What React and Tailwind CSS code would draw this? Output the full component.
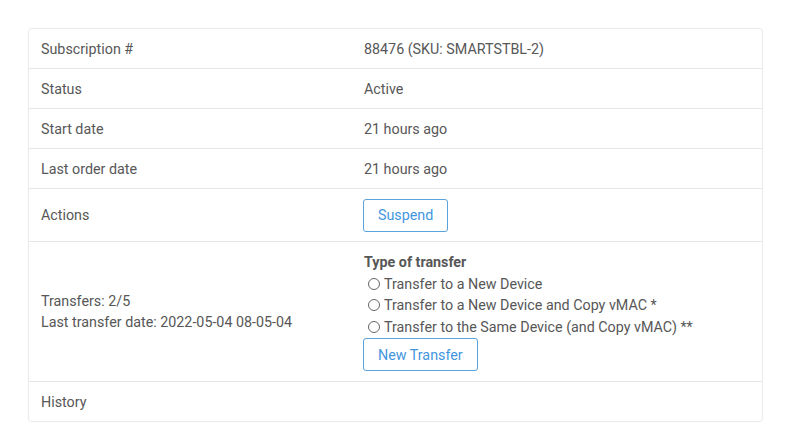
import { useState } from 'react'

const rows = [
  { label: 'Subscription #', value: '88476 (SKU: SMARTSTBL-2)' },
  { label: 'Status', value: 'Active' },
  { label: 'Start date', value: '21 hours ago' },
  { label: 'Last order date', value: '21 hours ago' },
]

const transferTypes = [
  'Transfer to a New Device',
  'Transfer to a New Device and Copy vMAC *',
  'Transfer to the Same Device (and Copy vMAC) **',
]

function OutlineButton({ children }) {
  return (
    <button className="h-[33px] px-[14px] rounded-[3px] border border-[#5ba3dd] bg-white text-[14.3px] text-[#4396de] leading-[20px]">
      {children}
    </button>
  )
}

function App() {
  const [transfer, setTransfer] = useState(null)

  return (
    <div className="min-h-screen bg-white p-[28px] font-['Roboto',sans-serif] text-[14.3px] leading-[20px] text-[#575757]">
      <div className="w-[735px] rounded-[4px] border border-[#ebebeb] shadow-[0_0_2px_rgba(0,0,0,0.04)] overflow-hidden">
        {rows.map((row) => (
          <div key={row.label} className="flex items-center h-[40px] border-b border-[#e6e6e6]">
            <div className="w-[323px] pl-[12px]">{row.label}</div>
            <div className="flex-1 pl-[12px]">{row.value}</div>
          </div>
        ))}

        <div className="flex items-center h-[53px] border-b border-[#e6e6e6]">
          <div className="w-[323px] pl-[12px]">Actions</div>
          <div className="flex-1 pl-[11px]">
            <OutlineButton>Suspend</OutlineButton>
          </div>
        </div>

        <div className="flex items-center h-[140px] border-b border-[#e6e6e6]">
          <div className="w-[323px] pl-[12px] leading-[21px]">
            <div>Transfers: 2/5</div>
            <div>Last transfer date: 2022-05-04 08-05-04</div>
          </div>
          <div className="flex-1 pl-[11px]">
            <div className="font-bold pl-[1px] leading-[21px]">Type of transfer</div>
            {transferTypes.map((t, i) => (
              <label key={t} className="flex items-center h-[21.5px] pl-[5px] cursor-pointer">
                <input
                  type="radio"
                  name="transfer"
                  checked={transfer === i}
                  onChange={() => setTransfer(i)}
                  className="appearance-none w-[12px] h-[12px] rounded-full border border-[#666] bg-white mr-[4px] checked:border-[4px] checked:border-[#3f92dc]"
                />
                <span>{t}</span>
              </label>
            ))}
            <div className="mt-[1px]">
              <OutlineButton>New Transfer</OutlineButton>
            </div>
          </div>
        </div>

        <div className="flex items-center h-[39px]">
          <div className="w-[323px] pl-[12px]">History</div>
          <div className="flex-1" />
        </div>
      </div>
    </div>
  )
}

export default App
